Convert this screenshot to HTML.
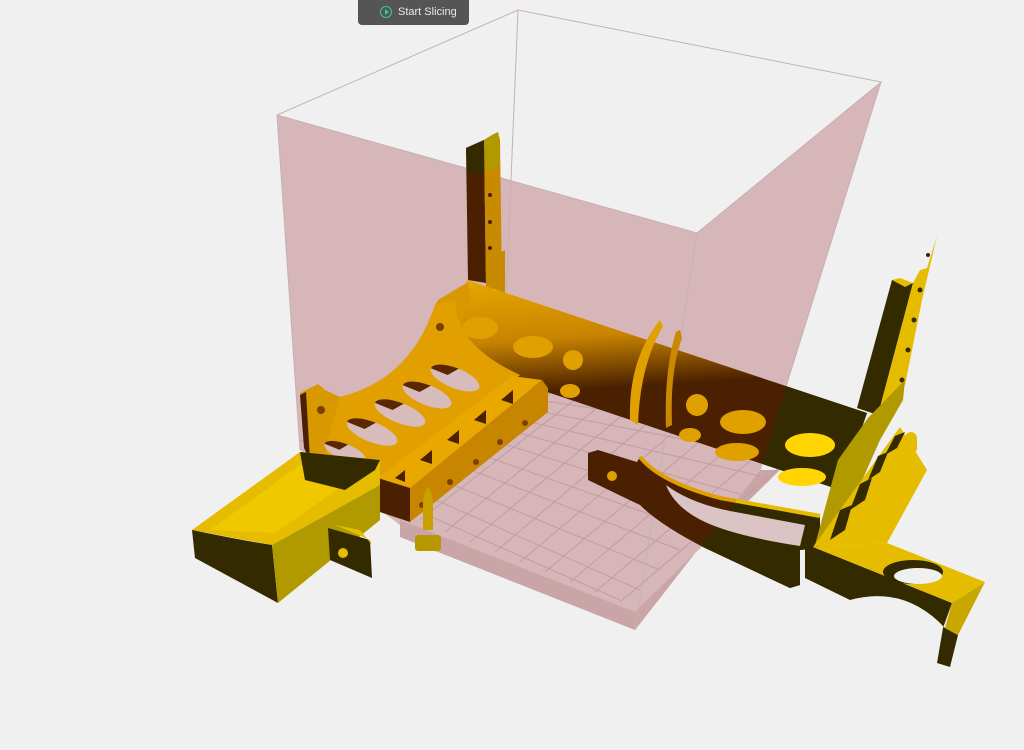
<!DOCTYPE html>
<html><head><meta charset="utf-8"><style>
html,body{margin:0;padding:0;background:#f0f0f0;width:1024px;height:750px;overflow:hidden;font-family:"Liberation Sans",sans-serif}
#btn{position:absolute;left:358px;top:0;width:111px;height:25px;background:#555555;border-radius:0 0 4px 4px;color:#e8e8e8;font-size:11px;line-height:25px;box-sizing:border-box;padding-left:40px}
#btn .ic{position:absolute;left:22px;top:6px;width:10px;height:10px;border:1.5px solid #2ecc9a;border-radius:50%}
#btn .ic:after{content:"";position:absolute;left:3.5px;top:2px;border-left:4px solid #2ecc9a;border-top:3px solid transparent;border-bottom:3px solid transparent}
svg{position:absolute;left:0;top:0}
</style></head><body>
<svg width="1024" height="750" viewBox="0 0 1024 750">
<defs>
<linearGradient id="tube" x1="0" y1="0" x2="0.12" y2="1">
<stop offset="0" stop-color="#e6a800"/><stop offset="0.3" stop-color="#c88400"/><stop offset="0.55" stop-color="#4a2000"/><stop offset="1" stop-color="#4a2000"/></linearGradient>
<linearGradient id="tubey" x1="0" y1="0" x2="0.12" y2="1">
<stop offset="0" stop-color="#f0c800"/><stop offset="0.3" stop-color="#b8a000"/><stop offset="0.55" stop-color="#332a00"/><stop offset="1" stop-color="#332a00"/></linearGradient>
<clipPath id="floor"><polygon points="300,440 555,390 780,470 635,612 400,520"/></clipPath>
<clipPath id="out"><polygon points="881,82 1024,82 1024,750 541,750 635,630 760,470"/></clipPath>
</defs>
<polygon points="277,115 697,233 881,82 760,470 635,630 400,525 300,450" fill="#d6b6b8"/>
<polygon points="635,612 780,470 760,470 635,630" fill="#c9a5a8"/>
<polygon points="400,520 635,612 635,630 400,537" fill="#c9a5a8"/>
<g clip-path="url(#floor)" stroke="#bf9da0" stroke-width="1">
<path d="M300,440 L640,590 M320,430 L660,570 M340,420 L680,550 M360,412 L700,532 M380,405 L720,512 M400,400 L740,494 M420,396 L760,476 M440,392 L780,458 M460,388 L800,440 M280,450 L620,600 M260,460 L600,615"/>
<path d="M420,520 L600,380 M445,532 L625,385 M470,542 L650,392 M495,552 L675,400 M520,562 L700,410 M545,572 L725,420 M570,582 L750,430 M595,592 L775,440 M620,602 L800,450 M395,510 L575,375 M645,612 L825,462"/>
</g>
<g stroke="#c8b0b2" stroke-width="1" fill="none">
<path d="M277,115 L518,10 L881,82 L697,233 L277,115 M518,10 L506,300 M697,233 L635,630 M881,82 L760,470 M277,115 L300,450"/>
</g>
<polygon points="466,148 484,140 486,283 468,280" fill="#4a2000"/>
<polygon points="466,148 484,140 486,175 467,172" fill="#332a00"/>
<polygon points="484,140 492,135 498,132 500,140 502,288 486,290" fill="#c88a00"/>
<polygon points="484,140 492,135 498,132 500,165 486,172" fill="#b09a00"/>
<polygon points="496,255 505,250 505,292 496,295" fill="#c88a00"/>
<circle cx="490" cy="195" r="2" fill="#4a2000"/><circle cx="490" cy="222" r="2" fill="#4a2000"/><circle cx="490" cy="248" r="2" fill="#4a2000"/>
<polygon points="467,280 867,413 840,490 550,393 455,365" fill="url(#tube)"/>
<ellipse cx="480" cy="328" rx="18" ry="11" fill="#e0a000"/>
<ellipse cx="533" cy="347" rx="20" ry="11" fill="#e0a000"/>
<ellipse cx="573" cy="360" rx="10" ry="10" fill="#e0a000"/>
<ellipse cx="570" cy="391" rx="10" ry="7" fill="#e0a000"/>
<ellipse cx="697" cy="405" rx="11" ry="11" fill="#e0a000"/>
<ellipse cx="743" cy="422" rx="23" ry="12" fill="#e0a000"/>
<ellipse cx="690" cy="435" rx="11" ry="7" fill="#e0a000"/>
<ellipse cx="737" cy="452" rx="22" ry="9" fill="#e0a000"/>
<g clip-path="url(#out)">
<polygon points="467,280 867,413 840,490 550,393 455,365" fill="url(#tubey)"/>
<ellipse cx="810" cy="445" rx="25" ry="12" fill="#ffd400"/>
<ellipse cx="802" cy="477" rx="24" ry="9" fill="#ffd400"/>
</g>
<path d="M630,420 Q628,360 660,320 L663,326 Q640,365 638,425z" fill="#e0a000"/>
<path d="M676,332 L680,330 L682,338 Q670,370 672,425 L666,428 Q664,370 676,332z" fill="#c88a00"/>
<path d="M300,393 L318,384 L325,390 L340,397 Q410,380 435,305 L438,300 L468,282 L470,300 Q458,330 458,345 L520,375 L380,480 L320,468 L305,445 Z" fill="#d89800"/>
<path d="M340,397 Q410,380 435,305 L455,300 Q455,345 520,375 L380,480 L322,462 Z" fill="#e2a000"/>
<polygon points="300,395 306,392 310,460 304,448" fill="#4a2000"/>
<circle cx="321" cy="410" r="4" fill="#7a4000"/><circle cx="440" cy="327" r="4" fill="#7a4000"/>
<g transform="rotate(22 455 378)"><ellipse cx="455" cy="378" rx="26" ry="10" fill="#d8bcbc"/><path d="M429,378 a26,10 0 0 1 26,-10 l-8,10z" fill="#5a2800"/></g>
<g transform="rotate(22 427 395)"><ellipse cx="427" cy="395" rx="26" ry="10" fill="#d8bcbc"/><path d="M401,395 a26,10 0 0 1 26,-10 l-8,10z" fill="#5a2800"/></g>
<g transform="rotate(22 400 413)"><ellipse cx="400" cy="413" rx="27" ry="10" fill="#d8bcbc"/><path d="M373,413 a27,10 0 0 1 27,-10 l-8,10z" fill="#5a2800"/></g>
<g transform="rotate(22 372 432)"><ellipse cx="372" cy="432" rx="27" ry="10" fill="#d8bcbc"/><path d="M345,432 a27,10 0 0 1 27,-10 l-8,10z" fill="#5a2800"/></g>
<g transform="rotate(22 345 452)"><ellipse cx="345" cy="452" rx="22" ry="8" fill="#d8bcbc"/><path d="M323,452 a22,8 0 0 1 22,-8 l-6,8z" fill="#5a2800"/></g>
<polygon points="378,478 512,376 542,380 410,488" fill="#e8a800"/>
<polygon points="378,478 410,488 410,522 380,512" fill="#4a2000"/>
<polygon points="410,488 542,380 548,388 548,412 410,522" fill="#c88600"/>
<g fill="#4a2000"><polygon points="395,478 405,470 405,482"/><polygon points="420,460 432,450 432,464"/><polygon points="447,440 459,430 459,444"/><polygon points="474,420 486,410 486,424"/><polygon points="501,400 513,390 513,404"/></g>
<g fill="#7a4000"><circle cx="422" cy="505" r="3"/><circle cx="450" cy="482" r="3"/><circle cx="476" cy="462" r="3"/><circle cx="500" cy="442" r="3"/><circle cx="525" cy="423" r="3"/></g>
<path d="M423,530 L423,505 Q423,492 428,487 Q433,492 433,505 L433,530z" fill="#c8a000"/>
<rect x="415" y="535" width="26" height="16" rx="3" fill="#b89800"/>
<polygon points="192,530 300,452 380,460 380,485 272,545" fill="#e6bc00"/>
<polygon points="210,530 300,465 365,470 275,533" fill="#f0c800"/>
<polygon points="300,452 305,480 345,490 375,470 380,460" fill="#332a00"/>
<path d="M192,530 Q240,540 272,545 L278,603 L195,558 Z" fill="#332a00"/>
<polygon points="272,545 380,485 380,520 278,603" fill="#b09a00"/>
<polygon points="328,528 370,540 372,578 330,560" fill="#332a00"/>
<polygon points="335,525 360,530 372,545 370,540" fill="#e6bc00"/>
<circle cx="343" cy="553" r="5" fill="#e6bc00"/>
<path d="M588,453 L598,450 L637,462 L640,457 Q660,482 720,498 L820,516 L820,548 L800,550 L800,585 L790,588 L705,548 Q660,525 640,505 L588,480 Z" fill="#4a2000"/>
<path d="M640,457 Q660,482 720,498 L820,516" stroke="#e0a000" stroke-width="4" fill="none"/>
<circle cx="612" cy="476" r="5" fill="#e0a000"/>
<g clip-path="url(#out)">
<path d="M640,457 Q660,482 720,498 L820,516 L820,548 L800,550 L800,585 L790,588 L705,548 Q660,525 640,505 Z" fill="#332a00"/>
<path d="M640,457 Q660,482 720,498 L820,516" stroke="#e6bc00" stroke-width="4" fill="none"/>
</g>
<path d="M666,485 Q690,503 730,511 L805,525 L800,546 Q735,536 705,522 Q675,508 666,485 Z" fill="#dcc4c6"/>
<polygon points="857,408 892,280 913,283 878,415" fill="#332a00"/>
<polygon points="892,280 900,278 913,283 905,287" fill="#e6bc00"/>
<polygon points="913,283 920,270 927,268 937,236 922,300 905,385 878,415" fill="#e6bc00"/>
<g fill="#332a00"><circle cx="920" cy="290" r="2.5"/><circle cx="914" cy="320" r="2.5"/><circle cx="908" cy="350" r="2.5"/><circle cx="902" cy="380" r="2.5"/><circle cx="928" cy="255" r="2"/></g>
<polygon points="838,460 868,418 905,380 903,400 880,440 832,548 815,545" fill="#b09a00"/>
<polygon points="813,547 900,427 927,470 887,543" fill="#e6bc00"/>
<g fill="#332a00"><polygon points="830,540 845,530 852,505 840,510"/><polygon points="850,510 865,500 872,478 860,484"/><polygon points="868,480 880,472 888,452 878,456"/><polygon points="885,455 897,448 905,432 895,436"/></g>
<rect x="905" y="432" width="12" height="22" rx="6" fill="#e6bc00"/>
<path d="M805,545 L813,547 L952,603 L943,628 L937,663 L950,667 L958,635 L945,628 Q905,585 850,600 L805,578 Z" fill="#332a00"/>
<polygon points="813,547 887,543 985,582 952,603" fill="#e6bc00"/>
<polygon points="952,603 985,582 958,635 945,628" fill="#c8a800"/>
<ellipse cx="913" cy="572" rx="30" ry="12" fill="#332a00"/>
<ellipse cx="918" cy="576" rx="24" ry="8" fill="#f0f0f0"/>
</svg>
<div id="btn"><span class="ic"></span>Start Slicing</div>
</body></html>
